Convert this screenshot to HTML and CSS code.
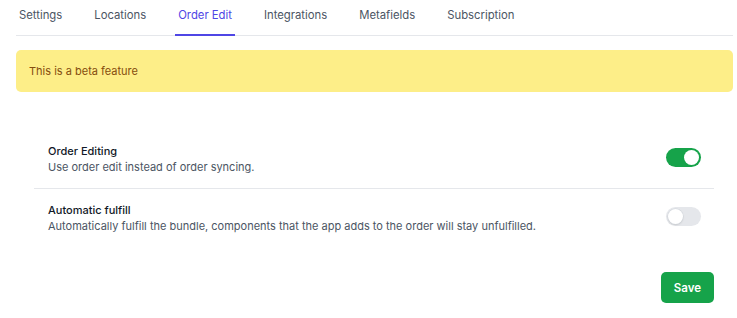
FILE: index.html
```html
<!DOCTYPE html>
<html lang="en">
<head>
    <meta charset="UTF-8">
    <title>Order Edit</title>
    <meta name="viewport" content="width=device-width, initial-scale=1.0">
    <link rel="stylesheet" href="styles.css">
</head>
<body>

<div class="page">
    <nav class="tabs">
        <a href="#" class="tab">Settings</a>
        <a href="#" class="tab">Locations</a>
        <a href="#" class="tab active">Order Edit</a>
        <a href="#" class="tab">Integrations</a>
        <a href="#" class="tab">Metafields</a>
        <a href="#" class="tab">Subscription</a>
    </nav>

    <div class="alert">This is a beta feature</div>

    <div class="settings">
        <ul class="setting-list">
            <li class="setting">
                <div class="setting-text">
                    <div class="setting-title">Order Editing</div>
                    <div class="setting-desc">Use order edit instead of order syncing.</div>
                </div>
                <button class="toggle on" aria-pressed="true"><span class="knob"></span></button>
            </li>
            <li class="setting">
                <div class="setting-text">
                    <div class="setting-title">Automatic fulfill</div>
                    <div class="setting-desc">Automatically fulfill the bundle, components that the app adds to the order will stay unfulfilled.</div>
                </div>
                <button class="toggle" aria-pressed="false"><span class="knob"></span></button>
            </li>
        </ul>
        <div class="actions">
            <button class="btn-save">Save</button>
        </div>
    </div>
</div>

</body>
</html>
```

FILE: styles.css
```css
body {
    margin: 0;
    padding: 0;
    font-family: Inter, 'Noto Sans', sans-serif;
    font-size: 11px;
    line-height: 16px;
    color: #111827;
    background: #ffffff;
}
.page {
    padding: 0 4px 0 16px;
}
.tabs {
    display: flex;
    gap: 26px;
    border-bottom: 1px solid #e5e7eb;
}
.tab {
    padding: 7px 3px 11px;
    border-bottom: 2px solid transparent;
    margin-bottom: -1px;
    font-size: 11.3px;
    color: #4b5563;
    text-decoration: none;
}
.tab.active {
    color: #4f46e5;
    border-bottom-color: #4f46e5;
}
.alert {
    margin-top: 14px;
    padding: 13px 13px;
    background: #fdee88;
    color: #854d0e;
    border-radius: 5px;
}
.settings {
    padding: 38px 19px 0 18px;
}
.setting-list {
    list-style: none;
    margin: 0;
    padding: 0;
}
.setting {
    display: flex;
    justify-content: space-between;
    align-items: flex-start;
    padding: 13px 13px 13px 14px;
}
.setting + .setting {
    border-top: 1px solid #e5e7eb;
}
.setting-title {
    font-weight: 500;
    color: #111827;
}
.setting-desc {
    color: #4b5563;
}
.toggle {
    position: relative;
    flex-shrink: 0;
    width: 35px;
    height: 19px;
    margin-top: 5px;
    padding: 0;
    border: none;
    border-radius: 10px;
    background: #e5e7eb;
    cursor: pointer;
}
.toggle .knob {
    position: absolute;
    top: 2px;
    left: 2px;
    width: 15px;
    height: 15px;
    border-radius: 50%;
    background: #ffffff;
    box-shadow: 0 0 0 0.5px #d1d5db, 0 1px 2px rgba(0, 0, 0, 0.15);
}
.toggle.on {
    background: #16a34a;
}
.toggle.on .knob {
    left: 18px;
    box-shadow: none;
}
.actions {
    display: flex;
    justify-content: flex-end;
    margin-top: 25px;
}
.btn-save {
    height: 31px;
    padding: 0 13px;
    border: none;
    border-radius: 5px;
    background: #16a34a;
    color: #ffffff;
    font-family: inherit;
    font-size: 11.5px;
    font-weight: 600;
    cursor: pointer;
}
```
